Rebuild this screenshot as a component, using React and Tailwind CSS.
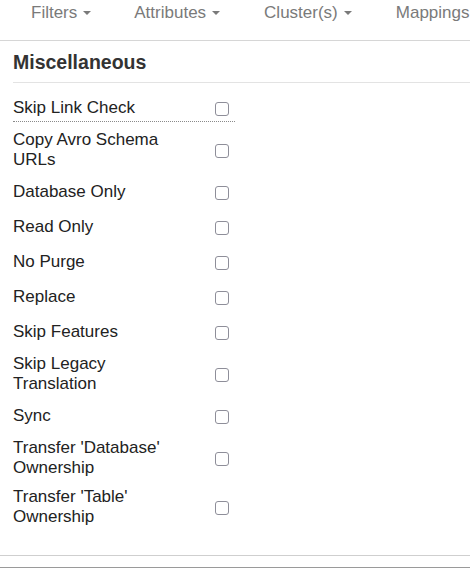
import React from "react";

const rows = [
  { label: "Skip Link Check", dotted: true },
  { label: "Copy Avro Schema URLs", double: true },
  { label: "Database Only" },
  { label: "Read Only" },
  { label: "No Purge" },
  { label: "Replace" },
  { label: "Skip Features" },
  { label: "Skip Legacy Translation", double: true },
  { label: "Sync" },
  { label: "Transfer 'Database' Ownership", double: true },
  { label: "Transfer 'Table' Ownership", double: true },
];

function Caret() {
  return (
    <span className="inline-block ml-[6px] align-middle w-0 h-0 border-l-[4px] border-r-[4px] border-t-[4px] border-l-transparent border-r-transparent border-t-[#7a7a7a] relative top-[-1px]" />
  );
}

function Box() {
  return <div className="w-[14px] h-[14px] border-[1.5px] border-[#8e8e99] rounded-[3px] bg-white shrink-0" />;
}

export default function App() {
  return (
    <div className="w-[470px] h-[568px] bg-white overflow-hidden" style={{ fontFamily: '"Liberation Sans", Arial, Helvetica, sans-serif' }}>
      <nav className="h-[41px] border-b border-[#d6d6d6] flex items-start pt-[3px] pl-[31px] text-[17px] leading-[20px] text-[#7a7a7a] whitespace-nowrap">
        <span>Filters<Caret /></span>
        <span className="ml-[43px]">Attributes<Caret /></span>
        <span className="ml-[44px]">Cluster(s)<Caret /></span>
        <span className="ml-[44px]">Mappings</span>
      </nav>
      <div className="pl-[13px]">
        <div className="h-[42px] border-b border-[#e3e3e3] flex items-center text-[19.5px] font-bold text-[#333] pt-[2px]">
          Miscellaneous
        </div>
        <div className="pt-[8px] text-[17px] leading-[20px] text-[#222]">
          {rows.map((r, i) =>
            r.dotted ? (
              <div key={i} className="w-[222px] pt-[3px] mb-[3px]">
                <div className="h-[28px] flex items-center border-b border-dotted border-[#8a8a8a]">
                  <div className="w-[170px]">{r.label}</div>
                  <div className="ml-[32px] mt-[2px]"><Box /></div>
                </div>
              </div>
            ) : (
              <div key={i} className={`w-[222px] flex items-center ${r.double ? "h-[49px]" : "h-[35px]"}`}>
                <div className="w-[165px] mr-[5px]">{r.label}</div>
                <div className="ml-[32px] mt-[2px]"><Box /></div>
              </div>
            )
          )}
        </div>
      </div>
      <div className="mt-[24px] border-t border-[#cfcfcf] h-[12px]" />
      <div className="border-t border-[#9a9a9a]" />
    </div>
  );
}
